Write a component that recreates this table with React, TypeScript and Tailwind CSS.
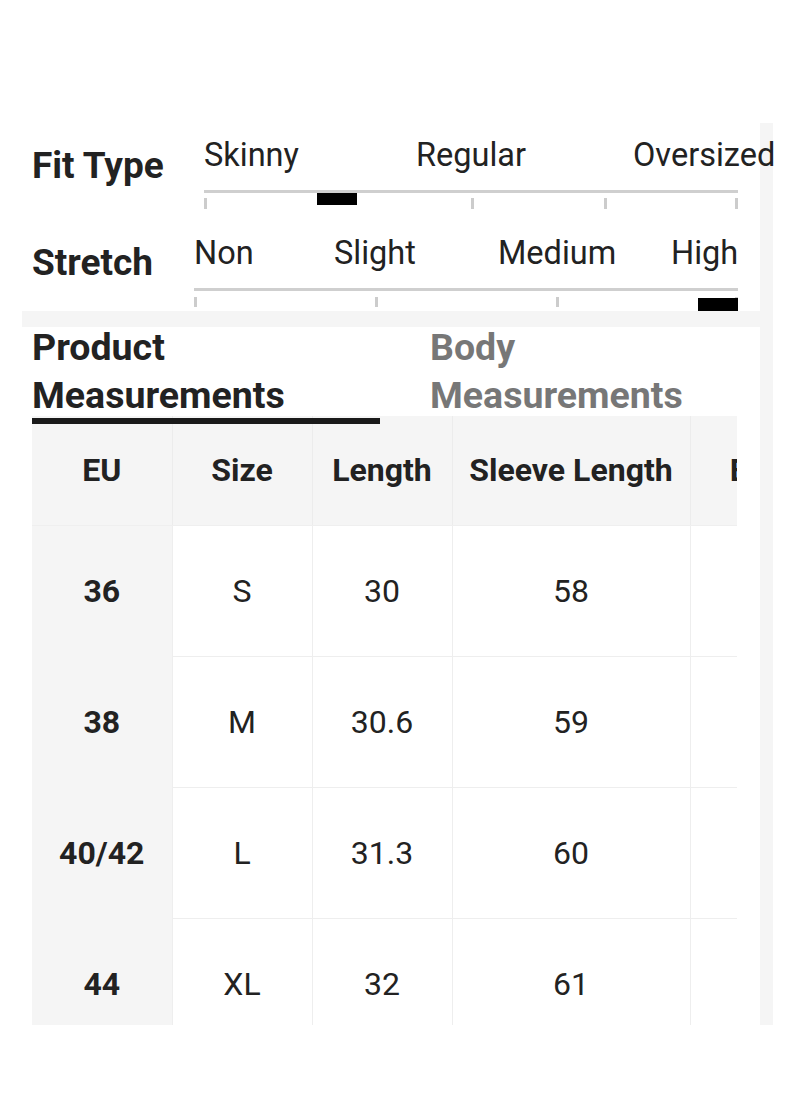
const fitLabels = [
  { text: "Skinny", w: "w-[212px]" },
  { text: "Regular", w: "w-[217px]" },
  { text: "Oversized", w: "" },
];
const stretchLabels = [
  { text: "Non", w: "w-[140px]" },
  { text: "Slight", w: "w-[164px]" },
  { text: "Medium", w: "w-[173px]" },
  { text: "High", w: "" },
];

const columns = [
  { key: "eu", title: "EU", width: 140 },
  { key: "size", title: "Size", width: 140 },
  { key: "length", title: "Length", width: 140 },
  { key: "sleeve", title: "Sleeve Length", width: 238 },
  { key: "bust", title: "Bust Size", width: 214 },
];

const rows = [
  { eu: "36", size: "S", length: "30", sleeve: "58", bust: "96" },
  { eu: "38", size: "M", length: "30.6", sleeve: "59", bust: "100" },
  { eu: "40/42", size: "L", length: "31.3", sleeve: "60", bust: "104" },
  { eu: "44", size: "XL", length: "32", sleeve: "61", bust: "110" },
];

function Tick({ left, top, height }: { left: number; top: number; height: number }) {
  return (
    <div
      className="absolute w-[3px] bg-[#cccccc]"
      style={{ left, top, height }}
    />
  );
}

export default function App() {
  return (
    <div className="min-h-[1096px] w-[800px] bg-white pt-[123px] font-['Roboto',sans-serif] text-[#222222]">
      <div className="ml-[22px] w-[751px] bg-[#f5f5f5] pr-[13px]">
        {/* fit type / stretch */}
        <div className="h-[188px] bg-white pl-[10px] pt-[14px]">
          <div className="flex items-start">
            <div className="w-[172px] shrink-0 pt-[8px] text-[37px] font-bold leading-[42px]">
              Fit Type
            </div>
            <div className="w-[534px]">
              <div className="flex w-[569px] whitespace-nowrap text-[32.5px] leading-[37px]">
                {fitLabels.map((l) => (
                  <span key={l.text} className={"shrink-0 " + l.w}>
                    {l.text}
                  </span>
                ))}
              </div>
              <div className="mt-[16px] h-[3px] bg-[#cfcfcf]" />
              <div className="relative h-[16px]">
                <Tick left={0} top={5} height={11} />
                <Tick left={267} top={5} height={11} />
                <Tick left={400} top={5} height={11} />
                <Tick left={531} top={5} height={11} />
                <div className="absolute left-[113px] top-0 h-[12px] w-[40px] bg-black" />
              </div>
            </div>
          </div>

          <div className="mt-[26px] flex items-start">
            <div className="w-[162px] shrink-0 pt-[7px] text-[37px] font-bold leading-[42px]">
              Stretch
            </div>
            <div className="w-[544px]">
              <div className="flex whitespace-nowrap text-[32.5px] leading-[37px]">
                {stretchLabels.map((l) => (
                  <span key={l.text} className={"shrink-0 " + l.w}>
                    {l.text}
                  </span>
                ))}
              </div>
              <div className="mt-[16px] h-[3px] bg-[#cfcfcf]" />
              <div className="relative h-[20px]">
                <Tick left={0} top={6} height={10} />
                <Tick left={181} top={6} height={10} />
                <Tick left={362} top={6} height={10} />
                <Tick left={541} top={6} height={10} />
                <div className="absolute left-[504px] top-[7px] h-[13px] w-[40px] bg-black" />
              </div>
            </div>
          </div>
        </div>

        {/* measurements */}
        <div className="mt-[16px] h-[698px] bg-white pl-[10px]">
          <div className="flex h-[89px] text-[37.5px] font-bold leading-[48px]">
            <div className="relative w-[348px] shrink-0">
              <div className="-mt-[4px]">
                Product
                <br />
                Measurements
              </div>
              <div className="absolute left-0 top-[91px] z-10 h-[6px] w-[348px] bg-[#1a1a1a]" />
            </div>
            <div className="ml-[50px] -mt-[4px] whitespace-nowrap text-[#777777]">
              Body
              <br />
              Measurements
            </div>
          </div>

          <div className="h-[609px] w-[705px] overflow-hidden">
            <table className="w-[872px] max-w-none table-fixed border-collapse text-[32px]">
              <colgroup>
                {columns.map((c) => (
                  <col key={c.key} style={{ width: c.width }} />
                ))}
              </colgroup>
              <thead>
                <tr className="h-[109px] bg-[#f5f5f5]">
                  {columns.map((c, i) => (
                    <th
                      key={c.key}
                      className={
                        "whitespace-nowrap border-b border-[#efefef] text-center font-bold " +
                        (i > 0 ? "border-l border-l-[#ececec]" : "")
                      }
                    >
                      {c.title}
                    </th>
                  ))}
                </tr>
              </thead>
              <tbody>
                {rows.map((r) => (
                  <tr key={r.eu} className="h-[131px]">
                    {columns.map((c, i) =>
                      i === 0 ? (
                        <td
                          key={c.key}
                          className="bg-[#f5f5f5] text-center font-bold"
                        >
                          {r[c.key as keyof typeof r]}
                        </td>
                      ) : (
                        <td
                          key={c.key}
                          className="whitespace-nowrap border border-[#eeeeee] text-center"
                        >
                          {r[c.key as keyof typeof r]}
                        </td>
                      )
                    )}
                  </tr>
                ))}
              </tbody>
            </table>
          </div>
        </div>
      </div>
    </div>
  );
}
